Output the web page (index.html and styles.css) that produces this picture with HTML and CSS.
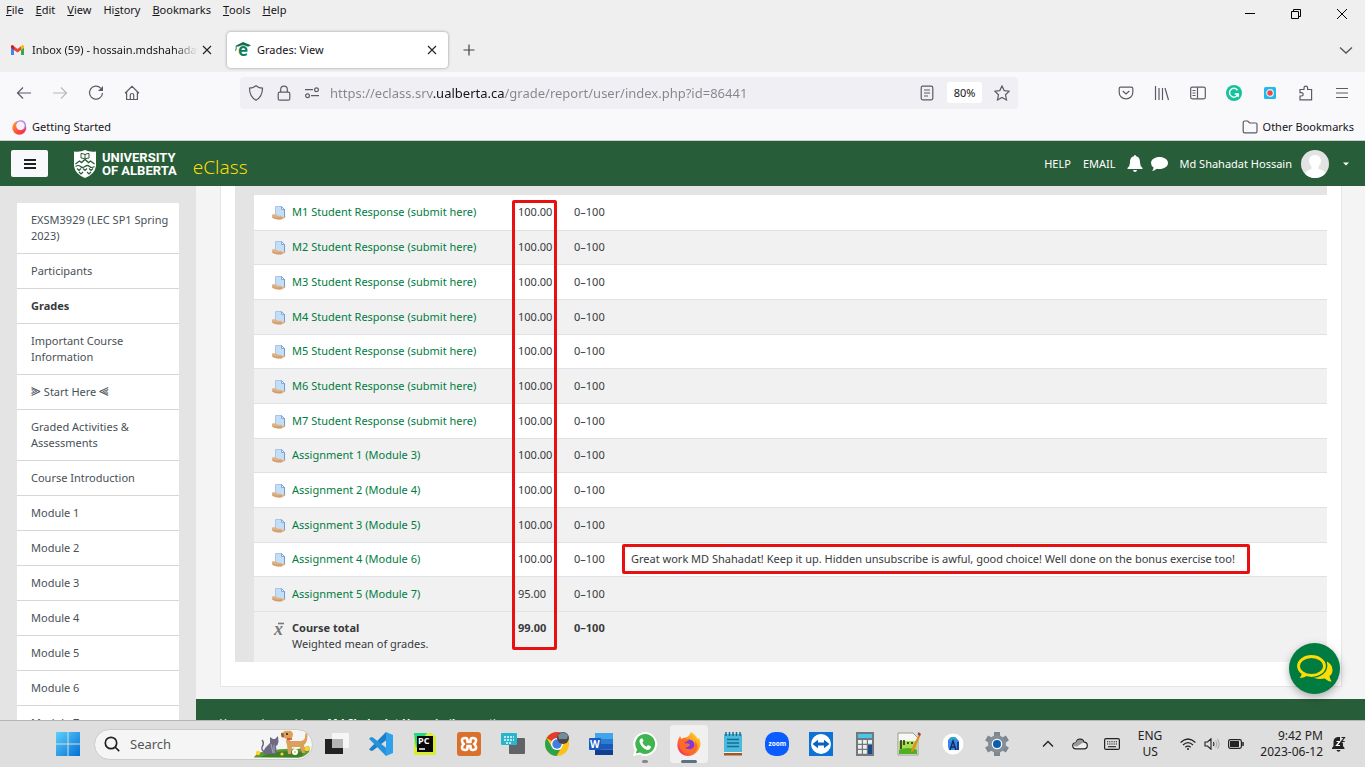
FILE: index.html
```html
<!DOCTYPE html>
<html lang="en">
<head>
<meta charset="utf-8">
<meta name="viewport" content="width=device-width, initial-scale=1">
<title>Grades: View</title>
<link rel="stylesheet" href="styles.css">
</head>
<body>
<svg class="sprite" aria-hidden="true">
  <symbol id="assign" viewBox="0 0 14 14">
    <path d="M3.500.5h6l3 3v8h-9z" fill="#c4def6" stroke="#a3c6ee"/>
    <path d="M9.500.5v3h3z" fill="#eef6ff" stroke="#6f9cd6" stroke-width=".8"/>
    <path d="M12.500 3.500v8" stroke="#6f9cd6"/>
    <path d="M0 8.800c1.500-.8 3-.6 4 0l2 1h3c1 0 1 1.200 0 1.300 1.500 0 3-.8 4.800-.4C12 12.800 9 14 6.500 13.800 4 13.700 2 12.200 0 11.700z" fill="#e0b183"/>
    <path d="M1 11.700c3 .4 6 1 9 .2" stroke="#c08a58" fill="none" stroke-width=".8"/>
  </symbol>
  <symbol id="close" viewBox="0 0 12 12"><path d="M2 2l8 8M10 2l-8 8" stroke="#222" stroke-width="1.100" fill="none"/></symbol>
</svg>

<div class="chrome">
  <div class="titlebar">
    <nav class="menus" aria-label="Menu bar">
      <button><u>F</u>ile</button><button><u>E</u>dit</button><button><u>V</u>iew</button><button>Hi<u>s</u>tory</button><button><u>B</u>ookmarks</button><button><u>T</u>ools</button><button><u>H</u>elp</button>
    </nav>
    <div class="window-controls">
      <button aria-label="Minimize"><svg width="12" height="12" viewBox="0 0 12 12"><path d="M1 5.500h10" stroke="#000"/></svg></button>
      <button aria-label="Restore"><svg width="12" height="12" viewBox="0 0 12 12" fill="none" stroke="#000"><path d="M1.500 3.500h7v7h-7zM3.500 3.500v-2h7v7h-2"/></svg></button>
      <button aria-label="Close"><svg width="12" height="12" viewBox="0 0 12 12"><path d="M1 1l10 10M11 1L1 11" stroke="#000"/></svg></button>
    </div>
  </div>

  <div class="tabs">
    <div class="tab">
      <svg width="15" height="12" viewBox="0 0 15 12"><path d="M1 2v8.500q0 .5.500.500H4V4.500z" fill="#4285f4"/><path d="M11 4.500V11h2.500q.5 0 .5-.5V2z" fill="#34a853"/><path d="M4 6V2.300l3.500 2.600L11 2.300V6L7.500 8.600z" fill="#ea4335"/><path d="M1 2q.6-1.800 2.200-.6L4 2v4L1 3.700z" fill="#c5221f"/><path d="M14 2q-.6-1.800-2.200-.6L11 2v4l3-2.300z" fill="#fbbc04"/></svg>
      <span class="tab-label faded">Inbox (59) - hossain.mdshahadat</span>
      <button aria-label="Close tab"><svg width="12" height="12"><use href="#close"/></svg></button>
    </div>
    <div class="tab active">
      <svg width="16" height="16" viewBox="0 0 16 16"><path d="M8 0l8 3.300-3 1.500Q11 3.300 8 3.300T3 4.800L1.600 4.300V7L.8 9 0 8.500.7 7V3.800z" fill="#11704a"/><text x="3" y="14" font-size="17" class="glyph" fill="#11805a">e</text></svg>
      <span class="tab-label">Grades: View</span>
      <button aria-label="Close tab"><svg width="12" height="12"><use href="#close"/></svg></button>
    </div>
    <button class="new-tab" aria-label="New tab"><svg width="14" height="14" viewBox="0 0 14 14"><path d="M7 1.500v11M1.500 7h11" stroke="#444" stroke-width="1.200"/></svg></button>
    <button class="all-tabs" aria-label="List all tabs"><svg width="14" height="14" viewBox="0 0 14 14"><path d="M1 4.500l6 5.500 6-5.500" fill="none" stroke="#555" stroke-width="1.300"/></svg></button>
  </div>

  <div class="toolbar">
    <button aria-label="Back"><svg viewBox="0 0 16 16"><path d="M15 8H1.500M7 2.500L1.500 8 7 13.500"/></svg></button>
    <button class="dim" aria-label="Forward"><svg viewBox="0 0 16 16"><path d="M1 8h13.500M9 2.500L14.500 8 9 13.500"/></svg></button>
    <button aria-label="Reload"><svg viewBox="0 0 16 16"><path d="M12.800 3.300A6.500 6.500 0 1 0 14.500 8"/><path d="M15 1v5h-5z" fill="#5b5b66" stroke="none"/></svg></button>
    <button aria-label="Home"><svg viewBox="0 0 16 16"><path d="M1 8.200L8 1.300l7 6.900M2.600 7v7.500h10.800V7M6.300 14.500V10q0-1.500 1.700-1.500T9.700 10v4.500"/></svg></button>
    <div class="urlbar">
      <svg viewBox="0 0 16 16"><path d="M8 .8q3 2.400 6.500 2.400 0 8.300-6.500 12Q1.500 11.500 1.500 3.200 5 3.200 8 .8z"/></svg>
      <svg viewBox="0 0 16 16"><rect x="2.200" y="7.200" width="11.600" height="8" rx="1.500"/><path d="M4.700 7V4.500a3.300 3.300 0 0 1 6.600 0V7"/></svg>
      <svg viewBox="0 0 16 16"><path d="M1 4.700h8M7 10.700h8"/><circle cx="12.500" cy="4.700" r="1.900"/><circle cx="3.500" cy="10.700" r="1.900"/></svg>
      <input type="text" aria-label="Address" value="https://eclass.srv.ualberta.ca/grade/report/user/index.php?id=86441">
      <button aria-label="Reader view"><svg viewBox="0 0 16 16"><rect x="2.200" y="1.200" width="11.600" height="13.600" rx="1.500"/><path d="M5 5h6M5 8h6M5 11h4"/></svg></button>
      <button class="zoom">80%</button>
      <button aria-label="Bookmark"><svg viewBox="0 0 16 16"><path d="M8 .9l2.200 4.700 5 .6-3.700 3.500 1 5.200L8 12.400l-4.500 2.500 1-5.200L.8 6.200l5-.6z"/></svg></button>
    </div>
    <button aria-label="Pocket"><svg viewBox="0 0 16 16"><path d="M2.500 2.200h11q1.300 0 1.300 1.300V7.500a6.800 6.300 0 0 1-13.600 0v-4q0-1.300 1.300-1.300zM4.700 6L8 9l3.300-3"/></svg></button>
    <button aria-label="Library"><svg viewBox="0 0 16 16"><path d="M1.500 1v14M5 3v12M8.500 3v12M11 3l3.500 12"/></svg></button>
    <button aria-label="Sidebars"><svg viewBox="0 0 16 16"><rect x=".7" y="2.200" width="14.600" height="11.600" rx="1.500"/><path d="M7.500 2.500v11M2.500 5.500h3M2.500 8h3M2.500 10.500h3"/></svg></button>
    <button aria-label="Grammarly"><svg viewBox="0 0 16 16"><circle cx="8" cy="8" r="8" fill="#15c39a" stroke="none"/><path d="M11.500 5.200A4.400 4.400 0 1 0 12 9.300M8.700 9h3.600v2.800" stroke="#fff" stroke-width="1.500"/></svg></button>
    <button aria-label="Screen recorder"><svg viewBox="0 0 16 16"><rect x="2" y="2" width="12" height="12" rx="1.500" fill="#22b9ee" stroke="none"/><circle cx="8" cy="8" r="3.300" fill="#ef4b3f" stroke="#d9f5ff" stroke-width="1.200"/></svg></button>
    <button aria-label="Extensions"><svg viewBox="0 0 16 16"><path d="M2 4.500h4V3a1.800 1.800 0 0 1 3.600 0v1.500h4v10.300H2V11h1.500a1.700 1.700 0 0 0 0-3.400H2z"/></svg></button>
    <button aria-label="Menu"><svg viewBox="0 0 16 16"><path d="M2 3.500h12M2 8h12M2 12.500h12"/></svg></button>
  </div>

  <div class="bookmarks">
    <a href="#"><svg width="16" height="16" viewBox="0 0 16 16"><defs><linearGradient id="bm" x1="0" x2="1" y1="0" y2="1"><stop stop-color="#ffb02e"/><stop offset=".6" stop-color="#fb4a3c"/><stop offset="1" stop-color="#e8256b"/></linearGradient></defs><circle cx="8.300" cy="8.700" r="7" fill="url(#bm)"/><circle cx="10" cy="6.300" r="5" fill="#a98af5"/><circle cx="9.400" cy="6.700" r="4.200" fill="#fbeef4"/></svg>Getting Started</a>
    <a href="#"><svg width="16" height="16" viewBox="0 0 16 16" fill="none" stroke="#5b5b66" stroke-width="1.200"><path d="M1.200 3.500q0-1.500 1.500-1.500h3l2 2h6q1.300 0 1.300 1.300v7.200q0 1.300-1.300 1.300H2.500q-1.300 0-1.300-1.300z"/></svg>Other Bookmarks</a>
  </div>
</div>

<header class="site-header">
  <button class="drawer" aria-label="Side panel"><svg width="12" height="12" viewBox="0 0 12 12"><path d="M0 2h12M0 6h12M0 10h12" stroke="#1d2125" stroke-width="2"/></svg></button>
  <a class="brand" href="#">
    <svg width="22" height="28" viewBox="0 0 22 28"><path d="M11 0q5 2.500 11 1.500V16q-1 8-11 12Q1 24 0 16V1.500Q6 2.500 11 0z" fill="#fff"/><path d="M7 3.500q2 0 4 1 2-1 4-1V8q-2 0-4 1-2-1-4-1zM11 4.500V9" fill="#fff" stroke="#275d38"/><path d="M1.500 14l4-3 2 1.500L11 9.500l3.500 3 2-1.500 4 3" fill="none" stroke="#275d38" stroke-width="1.400"/><path d="M1.500 16.500q3-2 5 0t4.500 0 4.500 0 5 0" fill="none" stroke="#275d38" stroke-width="1.200"/><path d="M3 18.500l2 2 2-2M9 18.500l2 2 2-2M15 18.500l2 2 2-2M5 22l2 2 2-2M13 22l2 2 2-2" fill="none" stroke="#275d38" stroke-width="1.200"/></svg>
    <span class="brand-name">UNIVERSITY<br>OF ALBERTA</span>
    <span class="product">eClass</span>
  </a>
  <nav class="user-nav">
    <a href="#">HELP</a>
    <a href="#">EMAIL</a>
    <button aria-label="Notifications"><svg width="16" height="17" viewBox="0 0 16 17" fill="#fff"><path d="M8 0q1 0 1 1.300C12.500 2 13 5 13 7.500q0 3.500 2.500 5.500v1H.5v-1Q3 11 3 7.500C3 5 3.500 2 7 1.300 7 0 8 0 8 0zM6 15h4q-.3 2-2 2t-2-2z"/></svg></button>
    <button aria-label="Messages"><svg width="17" height="14" viewBox="0 0 17 14" fill="#fff"><path d="M8.500 0C13 0 17 2.500 17 6s-4 6-8.500 6q-1.500 0-2.700-.3Q4 13.800 1 14q1.500-1.800 1.600-3.500Q0 8.800 0 6c0-3.500 4-6 8.500-6z"/></svg></button>
    <button class="user">Md Shahadat Hossain
      <svg width="28" height="28" viewBox="0 0 28 28"><defs><clipPath id="av"><circle cx="14" cy="14" r="14"/></clipPath></defs><g clip-path="url(#av)"><path d="M0 0h28v28H0z" fill="#e3e3e3"/><path d="M14 5c4 0 6 2.600 6 6q0 3.500-2.500 5.500V19q5 1 7 4v5H4v-5q2-3 6.500-4v-2.500Q8 14.500 8 11c0-3.400 2-6 6-6z" fill="#fff"/></g></svg>
      <svg width="6" height="4" viewBox="0 0 6 4"><path d="M0 .500h6l-3 3z" fill="#fff"/></svg>
    </button>
  </nav>
</header>

<div class="page">
  <aside class="sidebar">
    <nav class="course-nav" aria-label="Course">
      <a href="#">EXSM3929 (LEC SP1 Spring 2023)</a>
      <a href="#">Participants</a>
      <a href="#" class="current">Grades</a>
      <a href="#">Important Course Information</a>
      <a href="#"><span class="arrow">⫸</span> Start Here <span class="arrow">⫷</span></a>
      <a href="#">Graded Activities &amp; Assessments</a>
      <a href="#">Course Introduction</a>
      <a href="#">Module 1</a>
      <a href="#">Module 2</a>
      <a href="#">Module 3</a>
      <a href="#">Module 4</a>
      <a href="#">Module 5</a>
      <a href="#">Module 6</a>
      <a href="#">Module 7</a>
    </nav>
  </aside>
  <div class="main-col">
    <main class="panel">
      <div class="report">
        <table>
          <colgroup><col class="c-item"><col class="c-grade"><col class="c-range"><col></colgroup>
          <tbody>
          <tr><th scope="row"><svg><use href="#assign"/></svg><a href="#">M1 Student Response (submit here)</a></th><td>100.00</td><td>0–100</td><td></td></tr>
          <tr><th scope="row"><svg><use href="#assign"/></svg><a href="#">M2 Student Response (submit here)</a></th><td>100.00</td><td>0–100</td><td></td></tr>
          <tr><th scope="row"><svg><use href="#assign"/></svg><a href="#">M3 Student Response (submit here)</a></th><td>100.00</td><td>0–100</td><td></td></tr>
          <tr><th scope="row"><svg><use href="#assign"/></svg><a href="#">M4 Student Response (submit here)</a></th><td>100.00</td><td>0–100</td><td></td></tr>
          <tr><th scope="row"><svg><use href="#assign"/></svg><a href="#">M5 Student Response (submit here)</a></th><td>100.00</td><td>0–100</td><td></td></tr>
          <tr><th scope="row"><svg><use href="#assign"/></svg><a href="#">M6 Student Response (submit here)</a></th><td>100.00</td><td>0–100</td><td></td></tr>
          <tr><th scope="row"><svg><use href="#assign"/></svg><a href="#">M7 Student Response (submit here)</a></th><td>100.00</td><td>0–100</td><td></td></tr>
          <tr><th scope="row"><svg><use href="#assign"/></svg><a href="#">Assignment 1 (Module 3)</a></th><td>100.00</td><td>0–100</td><td></td></tr>
          <tr><th scope="row"><svg><use href="#assign"/></svg><a href="#">Assignment 2 (Module 4)</a></th><td>100.00</td><td>0–100</td><td></td></tr>
          <tr><th scope="row"><svg><use href="#assign"/></svg><a href="#">Assignment 3 (Module 5)</a></th><td>100.00</td><td>0–100</td><td></td></tr>
          <tr><th scope="row"><svg><use href="#assign"/></svg><a href="#">Assignment 4 (Module 6)</a></th><td>100.00</td><td>0–100</td><td><span class="feedback">Great work MD Shahadat! Keep it up. Hidden unsubscribe is awful, good choice! Well done on the bonus exercise too!</span></td></tr>
          <tr><th scope="row"><svg><use href="#assign"/></svg><a href="#">Assignment 5 (Module 7)</a></th><td>95.00</td><td>0–100</td><td></td></tr>
          </tbody>
          <tfoot>
          <tr><th scope="row"><svg viewBox="0 0 14 14"><path d="M6 1.500h6" stroke="#777" stroke-width="1.600"/><text x="2" y="12.500" font-size="18" class="mean" fill="#777">x</text></svg>Course total<span class="note">Weighted mean of grades.</span></th><td>99.00</td><td>0–100</td><td></td></tr>
          </tfoot>
        </table>
        <div class="grade-mark"></div>
      </div>
    </main>
    <footer class="site-footer">You are logged in as <a href="#">Md Shahadat Hossain</a> (<a href="#">Log out</a>)</footer>
  </div>
  <button class="chat" aria-label="Chat"><svg width="36" height="28" viewBox="0 0 36 28"><path d="M30 6.500q5.500 3 5.500 8.500 0 4-3 6 .3 3 2.200 5.800-4.500-.8-7-3.300Q18 25 13 20.500 29 22 30 6.500z" fill="#ffdb05"/><ellipse cx="14.500" cy="11" rx="15.800" ry="12" fill="#007c41"/><path d="M4.500 16Q5.500 20 2.500 23q5 0 9-3.500z" fill="#ffdb05"/><ellipse cx="14.500" cy="11" rx="13" ry="9.500" fill="#007c41" stroke="#ffdb05" stroke-width="2.800"/></svg></button>
</div>

<div class="taskbar">
  <div class="apps">
    <button aria-label="Start"><svg viewBox="0 0 24 24"><defs><linearGradient id="wg" gradientUnits="userSpaceOnUse" x2="24" y2="24"><stop stop-color="#5fd0fb"/><stop offset="1" stop-color="#006fd6"/></linearGradient></defs><path d="M0 0h11.500v11.500H0zM12.500 0H24v11.500H12.500zM0 12.500h11.500V24H0zM12.500 12.500H24V24H12.500z" fill="url(#wg)"/></svg></button>
    <label class="search">
      <svg width="16" height="16" viewBox="0 0 16 16" fill="none" stroke="#222" stroke-width="1.700"><circle cx="7" cy="7" r="5.700"/><path d="M11 11l4.200 4.200"/></svg>
      <input type="search" placeholder="Search">
      <svg width="58" height="28" viewBox="0 0 58 28"><path d="M0 27.500q3-6 14-6.500 16-3 30-2l11-3q2 5-2 8-4 3.500-9 3.500z" fill="#5c9a33"/><path d="M6 27q14-7 34-6l10 1q-2 5-6 5.500z" fill="#3f7f2a"/><path d="M10 24q-1-5 3-8l3-3 0-6 3 2h2l3-3 .5 6q-.5 3-2.500 4 1 5 0 8z" fill="#6d6a83"/><path d="M11 22q-5-2-2-7 1-3-1-5" fill="none" stroke="#6d6a83" stroke-width="1.500"/><path d="M17 14l2 9M20 15v8" stroke="#a9a5b8" fill="none"/><path d="M28 5q1-5 6-4 4-1 5 3 0 4-3 5v2h11q4-1 4-4 0-4 2-5 1 4 0 8-1 4-3 5l1 8h-3l-2-6h-8l-1 7h-3l-1-9q-2-5 0-6-4-1-4-4z" fill="#dba15a"/><path d="M27 3q3-1 3 4-3 2-3-4z" fill="#94602f"/><circle cx="33" cy="4" r="1" fill="#2b1d12"/><path d="M33 9h5" stroke="#d13b36" stroke-width="1.500"/><g fill="#ffd02e"><circle cx="4" cy="23" r="2.200"/><circle cx="53" cy="18.500" r="2.600"/><circle cx="28" cy="24" r="1.600"/></g><circle cx="41" cy="22" r="3" fill="#fff"/><circle cx="41" cy="22" r="1" fill="#f6b91f"/></svg>
    </label>
    <button aria-label="Task view"><svg viewBox="0 0 24 24"><path d="M7 1h17v15H7z" fill="#f6f6f6"/><path d="M0 7h18v15H0z" fill="#222"/><path d="M7 7h11v9H7z" fill="#b5b5b5"/></svg></button>
    <button aria-label="Visual Studio Code"><svg viewBox="0 0 24 24"><path d="M17 0l1 7.500L4 18.500 2 19 0 17.200 17 0z" fill="#1b80c9"/><path d="M0 6.800L2 5l2 .5L18 16.500 17 24z" fill="#2492dc"/><path d="M17 0l7 3v18l-7 3z" fill="#2ea0ec"/></svg></button>
    <button aria-label="PyCharm"><svg viewBox="0 0 24 24"><path d="M1 1h17l5 4v18H1z" fill="#d8ee2e"/><path d="M1 1h13L3 16z" fill="#25d789"/><path d="M4 4h16v16H4z" fill="#080808"/><text x="5" y="12" font-size="9" class="glyph" fill="#fff">PC</text><path d="M6 17h6" stroke="#fff" stroke-width="1.500"/></svg></button>
    <button aria-label="XAMPP"><svg viewBox="0 0 24 24"><rect width="24" height="24" rx="3" fill="#d9712c"/><path d="M8.500 6q-4 0-3.500 3 .3 2 2 3-1.700 1-2 3-.5 3 3.500 3 2 0 2-2.500V14h3v1.500q0 2.500 2 2.500 4 0 3.500-3-.3-2-2-3 1.700-1 2-3 .5-3-3.500-3-2 0-2 2.500V10h-3V8.500Q10.500 6 8.500 6z" fill="none" stroke="#fff" stroke-width="2.600" stroke-linejoin="round"/></svg></button>
    <button aria-label="Touch keyboard"><svg viewBox="0 0 24 24"><rect x="8" y="6" width="16" height="16" rx="1" fill="#606468"/><rect y="1" width="16" height="12" rx="1" fill="#29b5cb"/><path d="M3 5h10M3 8h10M5 11h6" stroke="#e9fbff" stroke-width="1.300" stroke-dasharray="2 1"/></svg></button>
    <button aria-label="Chrome"><svg viewBox="0 0 24 24"><circle cx="12" cy="12" r="12" fill="#fbc116"/><path d="M12 12L1.600 6A12 12 0 0 1 22.400 6z" fill="#e33b2e"/><path d="M1.600 6L7 15l5 3 3 0-3.500 6A12 12 0 0 1 1.600 6z" fill="#2ba24c"/><circle cx="12" cy="12" r="6" fill="#fff"/><circle cx="12" cy="12" r="4.700" fill="#3f7ee8"/><circle cx="18" cy="6" r="6" fill="#50443f"/><path d="M13 3q5-5 10 0l-1 4h-8z" fill="#6d8da1"/></svg></button>
    <button aria-label="Word"><svg viewBox="0 0 24 24"><path d="M6 1h18v6H6z" fill="#41a5ee"/><path d="M6 7h18v5H6z" fill="#2b7cd3"/><path d="M6 12h18v5.500H6z" fill="#185abd"/><path d="M6 17.500h18V23H6z" fill="#103f91"/><rect y="6" width="12" height="12" rx="1" fill="#185abd"/><text x="1" y="15.500" font-size="10" class="glyph" fill="#fff">W</text></svg></button>
    <button class="running" aria-label="WhatsApp"><svg viewBox="0 0 24 24"><path d="M12 0a12 12 0 1 1-5.800 22.500L0 24l1.700-6A12 12 0 0 1 12 0z" fill="#fff"/><path d="M12 2a10 10 0 1 1-5 18.600L2.800 21.500 4 17.500A10 10 0 0 1 12 2z" fill="#40b54f"/><path d="M8 6.500q-2 1-1.500 3.500 2 6 7.500 8 3 0 4-2.500v-1L15 13l-1.500 1.700q-3-1.200-4.200-4.200L10.500 9 9.500 6.500z" fill="#fff"/></svg></button>
    <button class="running focused" aria-label="Firefox"><svg viewBox="0 0 24 24"><defs><linearGradient id="fx" x1="1" x2="0" y2="1"><stop stop-color="#ffe226"/><stop offset=".5" stop-color="#ff8a1f"/><stop offset="1" stop-color="#f5156c"/></linearGradient></defs><path d="M14 0q6 4 6.500 7l1.500-1q3 6 0 11-4 7-11 7T1 17Q-1 10 3 4l1.500 3Q6 5 9 5.500q3-1 5-5.500z" fill="url(#fx)"/><circle cx="12" cy="13" r="5.500" fill="#7b3bd8"/><path d="M3 8q5-4 9 1-4 0-4.500 2.500Q10 11 13 12q-1 4-5 3 2 3 6 2 5-2 4-8 5 6 0 11-6 4-12 0-5-5-3-12z" fill="#ff6a2a"/></svg></button>
    <button aria-label="Notepad"><svg viewBox="0 0 24 24"><path d="M3 2h18v19H3z" fill="#4bb9dc"/><path d="M3 21h18v2.500H3z" fill="#a4581e"/><path d="M5 0v4M8.500 0v4M12 0v4M15.500 0v4M19 0v4" stroke="#1b6e91" stroke-width="1.500"/><path d="M6 7.500h12M6 11h12M6 14.500h12" stroke="#136f93" stroke-width="1.400"/><path d="M3 20.500h18" stroke="#e8f5f8"/></svg></button>
    <button aria-label="Zoom"><svg viewBox="0 0 24 24"><rect width="24" height="24" rx="10" fill="#0b5cff"/><text x="3.500" y="14" font-size="6.500" class="glyph" fill="#fff">zoom</text></svg></button>
    <button aria-label="TeamViewer"><svg viewBox="0 0 24 24"><path d="M0 0h24v24H0z" fill="#0c72d4"/><circle cx="12" cy="12" r="10" fill="#fff"/><path d="M3.500 12L9 7.800v2.700h6V7.800l5.500 4.200-5.500 4.200v-2.700H9v2.700z" fill="#0c63bd"/></svg></button>
    <button aria-label="Calculator"><svg viewBox="0 0 24 24"><path d="M3 0h18v24H3z" fill="#73787d"/><path d="M5 2h14v4H5z" fill="#4bc5e8"/><path d="M5 8h3.800v3.800H5zM10 8h3.800v3.800H10zM15 8h4v3.800h-4zM5 13h3.800v3.800H5zM10 13h3.800v3.800H10zM5 18h3.800v3.800H5zM10 18h3.800v3.800H10z" fill="#eceff1"/><path d="M15 13h4v9h-4z" fill="#174b8b"/></svg></button>
    <button aria-label="Notepad++"><svg viewBox="0 0 24 24"><path d="M1 1h15l5 5v17H1z" fill="#f8f8f4" stroke="#9a9a92"/><path d="M2 9h18v13H2z" fill="#a5dd4c"/><path d="M2 18q9-4 18 0v4H2z" fill="#4fae24"/><path d="M4 8v9M7 8v5M10 11h2M14 11h2" stroke="#222" stroke-width="1.500"/><path d="M22 2l1.500 1.500L17 18l-3 3 .5-4z" fill="#e88b22"/><path d="M21.500 0l2.500 2-1 2-2.500-1.500z" fill="#8a4b53"/></svg></button>
    <button aria-label="Android Studio"><svg viewBox="0 0 24 24"><circle cx="12" cy="12" r="10.500" fill="#fff"/><path d="M7 8l3-3h4l4 4v9H8l-1-3z" fill="#3a83f1"/><path d="M10 5h4l2 2-8 2z" fill="#31a7c1"/><path d="M9 18l3-9 3 9M10 15h4M17 10v8" stroke="#0c2b57" stroke-width="1.400" fill="none"/></svg></button>
    <button aria-label="Settings"><svg viewBox="0 0 24 24"><path d="M12 0V24M1.600 6l20.800 12M1.600 18l20.800-12" stroke="#7d878f" stroke-width="6"/><circle cx="12" cy="12" r="9" fill="#858f97"/><circle cx="12" cy="12" r="5.300" fill="#f5f8fa"/><circle cx="12" cy="12" r="4" fill="#0b5eaf"/></svg></button>
  </div>
  <div class="tray">
    <button class="more" aria-label="Show hidden icons"><svg width="12" height="12" viewBox="0 0 12 12"><path d="M1 8.500l5-5 5 5" fill="none" stroke="#222" stroke-width="1.400"/></svg></button>
    <button aria-label="OneDrive"><svg width="16" height="12" viewBox="0 0 16 12"><path d="M4 10.800q-3.300 0-3.300-3T4 4.800Q5 1 8.300 1.200q3 .2 3.700 3 3.300 0 3.300 3.300T12 10.800z" fill="#eee" stroke="#222" stroke-width="1.200"/><path d="M4 4.800Q5 1.500 8.300 1.700q2.500.2 3.200 2.600L5 8.500 1.300 8q0-3 2.700-3.200z" fill="#999"/></svg></button>
    <button aria-label="Touch keyboard"><svg width="16" height="12" viewBox="0 0 16 12"><rect x=".6" y=".6" width="14.800" height="10.800" rx="1.500" fill="none" stroke="#222" stroke-width="1.200"/><path d="M3 3.700h10M3 6h10" stroke="#222" stroke-width="1.100" stroke-dasharray="1.200 1"/><path d="M4 8.700h8" stroke="#222" stroke-width="1.100"/></svg></button>
    <button class="lang">ENG<br>US</button>
    <button class="status" aria-label="Network, sound, battery">
      <svg width="16" height="12" viewBox="0 0 16 12" fill="none" stroke="#222" stroke-width="1.200"><path d="M.6 4.500q7.400-7 14.800 0M3 7q5-4.700 10 0M5.300 9.300q2.700-2.500 5.400 0"/><circle cx="8" cy="11" r="1" fill="#222" stroke="none"/></svg>
      <svg width="16" height="12" viewBox="0 0 16 12" fill="none" stroke="#222" stroke-width="1.100"><path d="M1 4h2.500L7 .8v10.400L3.500 8H1zM9.300 4q1.300 2 0 4"/><path d="M11.500 2.500q2.600 3.500 0 7M13.500 1q3.300 5 0 10" stroke="#aaa"/></svg>
      <svg width="16" height="12" viewBox="0 0 16 12"><rect x=".6" y="1.600" width="12.800" height="8.800" rx="1.800" fill="none" stroke="#222" stroke-width="1.200"/><rect x="2" y="3" width="9" height="6" fill="#222"/><path d="M15 4v4" stroke="#222" stroke-width="1.500"/></svg>
    </button>
    <button class="clock">9:42 PM<br>2023-06-12</button>
    <button aria-label="Notifications snoozed"><svg width="14" height="16" viewBox="0 0 14 16"><path d="M6 1q-4.500.6-4.500 5v4L0 12v1h12.500v-1L11 10V7L8 5V1z" fill="#222"/><path d="M4.500 14h4q-.5 1.700-2 1.700T4.500 14z" fill="#222"/><path d="M4.500 5.500h3.300L4.500 9.500h3.500" fill="none" stroke="#fff" stroke-width="1.200"/><path d="M9.500 1.500h3L9.500 5.500h3.200" fill="none" stroke="#222" stroke-width="1.200"/></svg></button>
  </div>
</div>
</body>
</html>
```
FILE: styles.css
```css
* { box-sizing: border-box; }
body { margin: 0; height: 100vh; overflow: hidden; display: flex; flex-direction: column; font: 11px/16px "Noto Sans", sans-serif; color: #373a3c; background: #f4f4f4; }
button { border: 0; background: none; padding: 0; margin: 0; font: inherit; color: inherit; display: flex; align-items: center; justify-content: center; flex: none; }
a { color: inherit; text-decoration: none; }
svg { flex: none; display: block; }
input { border: 0; outline: 0; background: none; padding: 0; font: inherit; min-width: 0; }
.sprite { position: absolute; width: 0; height: 0; }
.glyph { font-family: "Open Sans", sans-serif; font-weight: 700; }
.mean { font-family: "Liberation Serif", serif; font-weight: 700; font-style: italic; }

/* Browser window */
.chrome { flex: none; background: #efefef; color: #15141a; }
.titlebar { display: flex; justify-content: space-between; height: 28px; }
.menus { display: flex; gap: 12px; padding-left: 6px; height: 20px; }
.window-controls { display: flex; }
.window-controls button { width: 46px; height: 28px; }
.tabs { display: flex; align-items: center; height: 44px; padding-right: 12px; }
.tab { display: flex; align-items: center; gap: 7px; width: 223px; height: 36px; padding: 0 10px; }
.tab.active { width: 221px; margin-left: 4px; padding: 0 10px 0 8px; gap: 6px; background: #fff; border-radius: 4px; box-shadow: 0 0 3px rgba(0, 0, 0, .4); }
.tab-label { flex: 1; min-width: 0; overflow: hidden; white-space: nowrap; }
.tab:first-child .tab-label { margin-right: -4px; }
.new-tab { margin-left: 14px; }
.faded { -webkit-mask-image: linear-gradient(to right, #000 85%, transparent); mask-image: linear-gradient(to right, #000 85%, transparent); }
.all-tabs { margin-left: auto; }
.toolbar { display: flex; align-items: center; height: 41px; padding: 0 5px 0 6px; background: #f9f9fb; }
.toolbar button { width: 36px; height: 32px; }
.toolbar svg { width: 16px; height: 16px; fill: none; stroke: #5b5b66; stroke-width: 1.2; }
.toolbar .dim { opacity: .4; }
.urlbar { flex: 1; display: flex; align-items: center; gap: 12px; height: 32px; margin: 0 90px; padding: 0 8px; background: #f0f0f4; border-radius: 4px; }
.urlbar input { flex: 1; font-size: 13px; height: 24px; margin: 0 4px 0 -2px; color: transparent; background: linear-gradient(to right, #84848c 103px, #15141a 103px 175px, #84848c 175px); -webkit-background-clip: text; background-clip: text; }
.toolbar .urlbar button { width: 16px; }
.toolbar .urlbar .zoom { width: 35px; height: 21px; background: #fff; border-radius: 3px; }
.bookmarks { display: flex; align-items: center; justify-content: space-between; height: 28px; padding: 0 11px; background: #f9f9fb; border-bottom: 1px solid #ccc; }
.bookmarks a { display: flex; align-items: center; gap: 5px; }

/* Site header */
.site-header { flex: none; display: flex; align-items: center; height: 45px; padding: 0 16px 0 11px; background: #275d38; color: #fff; }
.drawer { width: 37px; height: 27px; background: #f8f9fa; border-radius: 2px; }
.brand { display: flex; align-items: center; margin-left: 26px; }
.brand-name { margin-left: 6px; font: 700 13px/13px Roboto, sans-serif; }
.product { margin: 6px 0 0 16px; font: 300 19px/24px "Noto Sans", sans-serif; color: #ffdb05; }
.user-nav { display: flex; align-items: center; gap: 12px; margin-left: auto; }
.user-nav a + button { margin-left: -1px; }
.user-nav button + button { margin-left: -4px; }
.user-nav .user { gap: 9px; margin-left: 0; }
.user svg + svg { margin-left: 5px; }

/* Page body */
.page { flex: 1; min-height: 0; overflow: hidden; display: flex; position: relative; }
.sidebar { flex: none; width: 196px; padding: 17px 17px 0; background: #e4e4e4; }
.course-nav a { display: block; padding: 9px 8px 9px 14px; background: #fff; border-bottom: 1px solid #d6d6d6; color: #495057; }
.course-nav .current { font-weight: 700; color: #373a3c; }
.arrow { font-size: 17px; line-height: 0; }
.main-col { flex: 1; min-width: 0; display: flex; flex-direction: column; }
.panel { margin: 0 23px 12px 24px; padding: 0 14px 24px; background: #fff; border: 1px solid #e6e6e6; border-top: 0; }
.report { position: relative; padding: 9px 0 0 19px; background: #e4e4e4; }
table { width: 100%; border-collapse: collapse; table-layout: fixed; background: #fff; }
.c-item { width: 264px; }
.c-grade { width: 56px; }
.c-range { width: 48px; }
tr { height: 35px; border-bottom: 1px solid #dee2e6; }
/* the row rhythm averages just under 35px */
tr:nth-child(3n+2) { height: 34px; }
tr:nth-child(even), tfoot tr { background: #f1f1f1; }
tfoot tr { border-bottom: 0; height: 51px; }
th, td { padding: 0; text-align: left; font-weight: 400; white-space: nowrap; }
th { padding-left: 38px; }
th svg { float: left; width: 14px; height: 14px; margin: 2px 0 0 -20px; }
th a { color: #007c41; }
tfoot th, tfoot td { vertical-align: top; padding-top: 8px; font-weight: 700; }
.note { display: block; font-weight: 400; }
.feedback { display: block; width: fit-content; padding: 4px 12px 4px 6px; border: 3px solid #e81010; border-radius: 2px; }
.grade-mark { position: absolute; left: 277px; top: 14px; bottom: 12px; width: 45px; border: 3px solid #e81010; border-radius: 2px; }
.site-footer { flex: none; height: 100px; padding: 16px 24px; background: #275d38; color: #fff; }
.site-footer a { font-weight: 700; }
.chat { position: absolute; right: 25px; bottom: 26px; width: 51px; height: 51px; border-radius: 50%; background: #007c41; box-shadow: 0 3px 8px rgba(0, 0, 0, .3); }

/* Taskbar */
.taskbar { position: relative; flex: none; display: flex; align-items: center; justify-content: space-between; height: 47px; padding: 0 19px 0 46px; background: #dedede; border-top: 1px solid #b5b5b5; color: #222; font: 12px/16px "Noto Sans", sans-serif; }
.apps { display: flex; align-items: center; }
.apps button { position: relative; width: 44px; height: 40px; }
.apps button > svg { width: 24px; height: 24px; }
.search { display: flex; align-items: center; width: 219px; height: 31px; margin: 0 2px 0 4px; padding-left: 9px; overflow: hidden; background: #f5f5f5; border: 1px solid #ccc; border-radius: 16px; }
.search input { flex: 1; margin-left: 10px; font-size: 13px; }
.search input::placeholder { color: #555; opacity: 1; }
.focused::before { content: ""; position: absolute; z-index: 0; inset: 1px 3px; background: #f0f0f0; border-radius: 4px; }
.focused svg { z-index: 1; }
.running::after { content: ""; position: absolute; bottom: 1px; width: 6px; height: 3px; border-radius: 2px; background: #888; }
.focused::after { width: 16px; background: #5b7280; }
.tray { display: flex; align-items: center; gap: 16px; }
.tray .more { margin-right: 2px; }
.tray .lang { margin: 0 2px; }
.tray .status { gap: 8px; }
.clock { text-align: right; }
.clock + button { margin-left: -7px; }
```
